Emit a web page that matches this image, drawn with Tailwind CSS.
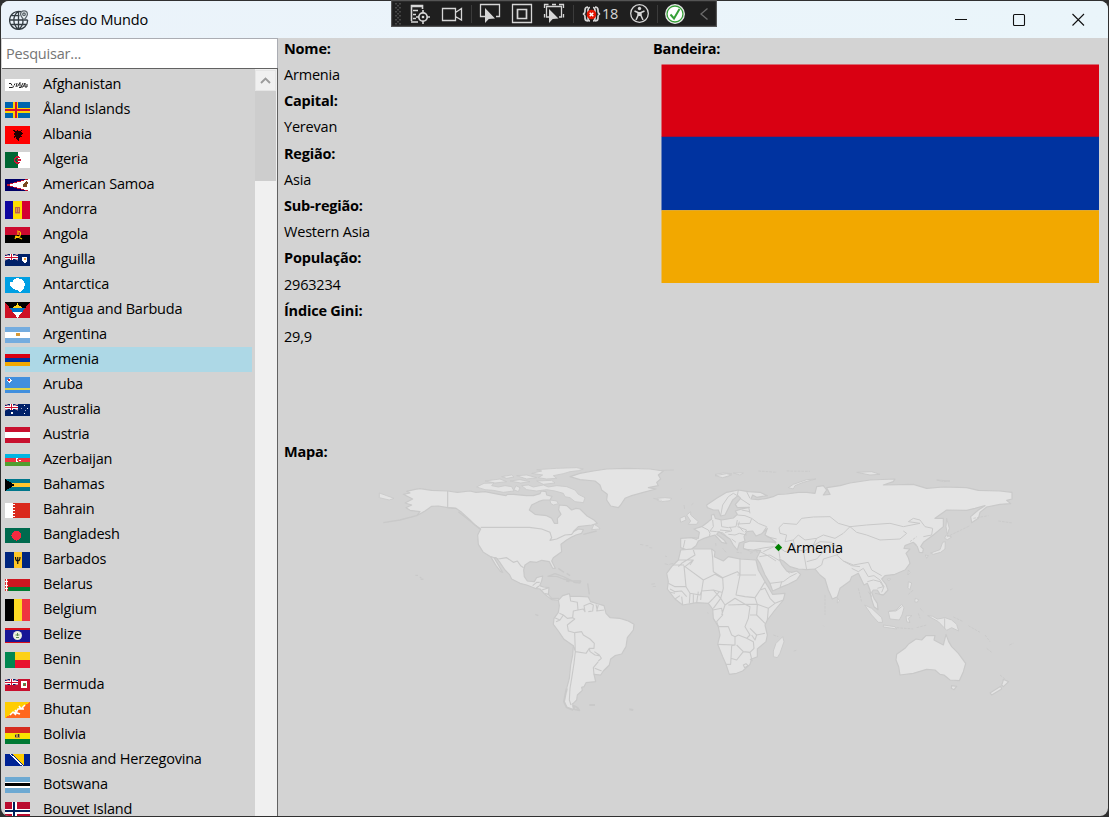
<!DOCTYPE html>
<html lang="pt">
<head>
<meta charset="utf-8">
<title>Países do Mundo</title>
<script src="https://cdn.jsdelivr.net/npm/@tailwindcss/browser@4"></script>
</head>
<body class="w-[1109px] h-[817px] overflow-hidden bg-[#303030] font-['Open_Sans','Noto_Sans',sans-serif] text-[14.5px] tracking-[-0.2px] text-black">
<div class="relative ml-px pt-px w-[1108px] h-[816px]">
<div class="flex flex-col w-[1107px] h-[815px] rounded-lg overflow-hidden bg-[#d3d3d3]">
  <header class="flex items-center h-[37px] shrink-0 bg-linear-to-r from-[#ebf3fa] to-[#eaf5fa]">
    <svg class="ml-2 w-5 h-5" viewBox="0 0 20 20" fill="none" stroke="#333c42" stroke-width="1.300">
      <path d="M12 1.7A9 9 0 1 0 18.6 10M9.5 1.4V19.2M1 10H18.6M2 5.7H10.500M2.300 14.500H17.200M9 1.500C3.500 6 3.500 14.500 9 19M10 19C14 15.500 14.500 12 13.500 9"/>
      <path d="M15 10C12.500 7 11.600 6 11.600 4.300a3.400 3.400 0 0 1 6.800 0C18.400 6 17.500 7 15 10Z" fill="#edf4f8" stroke="#5c666c"/><circle cx="15" cy="4.300" r="1.300" stroke="#5c666c"/>
    </svg>
    <h1 class="ml-[6px] text-[14.5px]">Países do Mundo</h1>
    <svg class="ml-auto mr-[23px] w-[132px] h-[16px]" viewBox="0 0 132 16" fill="none" stroke="#111" stroke-width="1.1"><path d="M2 7.500h12"/><rect x="60.500" y="2.500" width="11" height="11" rx="1"/><path d="M119.500 2l11.500 11.500M131 2L119.500 13.500"/></svg>
  </header>
  <div class="flex flex-1 min-h-0">
    <aside class="flex flex-col w-[277px] shrink-0 pl-px">
      <div class="flex items-center h-[30px] shrink-0 bg-white border-t border-[#abadb3] border-r pl-[4px] text-[#757575]">Pesquisar...</div>
      <div class="flex flex-1 min-h-0 border-t border-r border-[#626262]">
        <ul id="list" class="flex-1 pt-[3px] pl-[3px] pr-[3px] overflow-hidden"></ul>
        <div class="w-[22px] shrink-0 pt-px pr-px bg-[#f0f0f0]">
          <div class="flex items-center justify-center h-[21px] border border-[#e5e5e5]"><svg class="w-[11px] h-[8px]" viewBox="0 0 11 8" fill="none" stroke="#9b9b9b" stroke-width="1.900"><path d="M1 6l4.500-4.500L10 6"/></svg></div>
          <div class="h-[90px] bg-[#cdcdcd]"></div>
        </div>
      </div>
    </aside>
    <main class="flex-1 pl-[6px]">
      <div class="flex h-[401px]">
        <dl class="w-[369px] -mt-[2.2px] leading-[26.2px] [&>dt]:font-bold">
          <dt>Nome:</dt><dd>Armenia</dd><dt>Capital:</dt><dd>Yerevan</dd><dt>Região:</dt><dd>Asia</dd><dt>Sub-região:</dt><dd>Western Asia</dd><dt>População:</dt><dd>2963234</dd><dt>Índice Gini:</dt><dd>29,9</dd>
        </dl>
        <section class="-mt-[2px] leading-[26px]">
          <h2 class="font-bold tracking-[-0.3px]">Bandeira:</h2>
          <svg class="mt-[2px] ml-2 w-[439px] h-[220px]" viewBox="0 0 439 220"><path fill="#d90012" d="M.5.500h437.500v72.500H.5z"/><path fill="#0033a0" d="M.5 72.800h437.500v73.400H.5z"/><path fill="#f2a800" d="M.5 146.200h437.500v72.800H.5z"/></svg>
        </section>
      </div>
      <h2 class="font-bold leading-[26px]">Mapa:</h2>
      <div class="relative ml-[86px] w-[660px] h-[270px] -mt-[10px]">
        <svg class="block w-full h-full" viewBox="370 455 660 270" stroke="#c9c9c9" fill="#e4e4e4" stroke-linejoin="round">
          <!-- North America -->
          <g transform="translate(370 455) scale(.33333)" stroke-width="3.500">
            <path d="M100 118L120 114 110 109 135 103 150 101 185 106 233 108 262 112 300 108 318 112 345 110 375 116 408 122 412 118 430 118 470 122 490 122 510 116 514 108 528 110 530 120 546 124 540 135 520 135 505 140 485 150 478 165 495 178 530 182 545 190 553 205 563 205 562 190 573 178 566 165 568 150 590 152 605 165 618 160 630 162 650 182 672 195 682 205 665 210 625 215 610 230 625 222 640 224 635 235 618 240 605 246 590 255 573 268 575 290 550 308 545 318 556 340 548 340 538 320 515 316 500 322 480 320 465 330 461 345 463 365 472 378 493 380 500 368 518 363 515 378 509 392 520 396 537 398 535 418 545 430 565 430 572 436 545 434 525 418 510 402 495 400 470 390 450 385 425 372 418 358 405 345 388 320 378 308 372 308 385 330 398 352 392 350 378 332 362 305 340 292 325 268 323 240 332 222 315 210 300 195 275 172 258 160 233 158 205 153 185 154 165 168 140 182 150 170 120 166 108 158 125 150 105 144 128 132Z"/>
            <path d="M28 114L50 122 72 130 58 135 28 128ZM320 96L342 85 372 84 365 92 385 96 405 92 425 95 432 108 400 112 370 106 345 104ZM438 92L450 98 445 110 432 104ZM455 92L475 90 490 96 520 90 535 96 560 92 590 95 615 105 625 118 645 128 640 143 615 140 600 128 585 125 580 115 555 108 530 104 500 108 470 104ZM485 55L515 48 500 44 560 40 620 38 640 42 625 47 600 50 580 56 550 62 560 70 530 72 505 68 518 60ZM345 78L390 72 410 80 375 84ZM395 65L425 60 432 66 410 70ZM420 78L450 74 480 80 452 84ZM440 62L470 60 500 68 470 72ZM500 78L545 76 555 84 520 88ZM540 135L560 138 565 146 550 150 542 145ZM672 208L686 216 690 222 665 224Z" stroke-width="2.500"/>
            <path d="M534 364L555 356 580 365 608 378 580 372 560 364ZM610 378L632 378 630 384 612 382ZM588 378L598 380M565 340L582 352M590 355L600 362M653 385L658 418M640 238L680 228M136 361L144 361M149 367L154 368M152 372L160 373M496 478L505 482M660 749L672 749M140 182L90 195 40 203M265 170L290 190 330 222" fill="none" stroke-width="4"/>
            <path d="M233 108V158L258 160M332 217H478L515 222 540 232 545 248 540 256 560 252 585 240 605 238 615 225M362 305L385 312 410 308 430 322 442 318 452 332 461 338M488 392L500 382 509 382M507 393L498 400M516 405L537 398M525 416L536 418" fill="none" stroke-width="3.500"/>
          </g>
          <!-- South America, Greenland -->
          <g transform="translate(540 455) scale(.33333)" stroke-width="3.500">
            <path d="M55 436L68 422 88 416 90 424 120 424 145 426 152 440 175 447 192 452 198 475 210 488 240 490 265 498 282 508 280 525 262 548 258 575 245 597 225 602 212 612 208 630 190 648 182 660 162 658 167 680 138 683 132 695 125 697 127 706 112 720 110 735 100 745 92 750 88 740 80 745 82 725 80 700 88 670 92 630 98 600 100 572 72 553 55 528 40 508 42 490 55 472 58 452Z"/>
            <path d="M80 700L76 720 72 740 80 757 100 765M100 752L112 758 118 766 102 762ZM148 750L165 750M268 763L280 765" stroke-width="6"/>
            <path d="M90 424L92 438 112 442 114 465 100 468 98 488 104 492 82 510 85 528 104 533 125 530 130 540 150 552 163 565 162 580 148 580 138 595 106 590 100 572M163 590L178 600 184 610 175 618M148 580L150 590 165 600 178 602M175 620L160 638 162 658M164 640L185 648M106 590L102 625 95 670 90 700 88 735 93 750M114 465L130 462 135 470 132 452 150 445 160 450 158 468 145 470M175 450L170 468 192 465M168 448L172 467M44 488L60 495 70 480M48 500L60 495M58 475L70 480 82 490 100 488M104 533L106 590" fill="none" stroke-width="3.300"/>
            <path d="M90 65L120 55 160 48 200 42 260 40 330 42 370 48 355 60 362 72 350 82 355 92 325 98 348 102 310 112 275 122 255 130 242 150 235 158 212 153 200 135 202 118 185 105 180 90 165 78 120 74Z"/>
            <path d="M350 130L375 128 395 130 390 137 365 140 352 136ZM525 58L550 54 575 56 565 65 545 66ZM580 54L610 54 600 60Z" stroke-width="2.500"/>
            <path d="M363 46L402 45M300 268L310 270M317 272L325 272M328 278L337 279M375 303L381 305M374 326L385 329M388 328L400 325M334 388L345 386M338 395L348 394M502 473L505 475M434 162L432 150M454 150L460 145M422 103L425 101" fill="none" stroke-width="2.500"/>
          </g>
          <!-- Eurasia, Africa, Oceania -->
          <g transform="translate(650 455) scale(.33333)" stroke-width="3.500">
            <path d="M92 250L125 248 145 250 148 232 132 222 155 215 175 200 185 192 184 180 192 178 196 190 215 195 250 189 262 178 256 168 275 162 298 157 262 158 256 148 272 130 264 122 248 135 240 150 225 180 212 183 205 165 190 165 172 158 170 150 200 130 230 112 265 105 295 110 330 112 352 122 320 127 308 120 303 132 325 134 350 130 372 124 385 118 410 117 445 112 470 112 495 115 500 95 520 92 530 105 520 120 540 118 530 98 570 92 600 84 660 75 735 72 730 80 700 90 790 88 830 100 880 96 950 98 985 106 1050 108 1086 112 1086 132 1070 136 1082 146 1050 148 1010 156 990 172 985 190 965 203 962 185 985 165 1005 152 975 160 950 166 890 165 855 190 880 190 880 215 850 240 820 262 812 275 820 282 818 293 808 292 802 275 790 262 765 272 762 280 780 282 768 295 775 308 780 325 765 345 735 358 705 362 695 372 708 388 714 405 700 420 690 418 682 405 670 405 665 412 672 430 682 445 684 464 672 455 664 430 660 405 652 385 642 390 625 355 605 365 600 378 570 400 562 425 547 432 535 405 525 372 510 360 495 342 470 344 445 342 420 335 400 318 388 312 395 328 410 348 425 352 440 348 452 358 440 375 415 388 390 398 368 408 360 385 345 360 330 325 320 310 332 286 300 288 280 280 282 264 300 258 340 260 378 262 360 248 345 240 352 220 335 236 318 243 308 228 290 230 282 245 285 258 268 264 262 285 250 270 240 252 225 242 207 230 200 238 222 255 230 266 215 262 195 240 178 245 162 250 145 258 138 272 125 282 108 284 92 278Z"/>
            <path d="M92 285L130 282 185 282 195 290 193 305 220 318 235 305 270 312 318 315 325 345 345 380 360 405 368 418 405 415 400 435 375 465 352 495 345 510 352 540 348 560 322 582 322 605 305 612 300 628 278 648 260 655 238 658 228 628 218 605 203 568 210 540 205 515 190 490 188 462 175 445 140 443 98 450 75 432 52 402 55 380 50 355 65 335 85 315Z"/>
            <path d="M398 545L402 560 390 595 382 608 370 605 370 588 378 565ZM562 428L569 438 562 444ZM110 180L122 170 122 180 145 200 140 208 115 208 122 198ZM90 190L105 183 108 195 92 202ZM415 98L430 88 470 74 498 72 460 82 435 92 430 102ZM195 62L230 56 245 60 218 68ZM620 52L665 50 690 58 660 60ZM860 75L900 78 880 80ZM890 190L898 220 892 238 888 215ZM888 240L905 246 892 254 884 250ZM886 260L885 282 872 292 850 298 842 294 870 284 878 262ZM826 300L835 302 830 310ZM775 345L780 352 774 360ZM712 372L722 372 716 378ZM775 380L785 384 780 404 774 398ZM796 430L806 434 802 442 794 440ZM644 450L665 460 695 488 698 502 685 502 665 480ZM700 510L735 515 740 522 700 516ZM715 470L738 465 755 448 762 458 756 480 748 495 720 492ZM768 483L786 482 775 490 780 503 770 500ZM833 482L848 484 862 492 885 488 905 495 920 508 926 528 905 518 890 526 865 500Z" stroke-width="2.800"/>
            <path d="M740 598L765 580 775 568 798 552 815 555 828 542 855 542 852 555 880 570 888 538 896 560 905 575 925 595 947 625 940 650 928 677 900 675 882 660 870 658 855 645 830 643 790 655 750 660 746 635 738 615ZM905 692L920 694 912 704 904 700ZM1060 673L1076 680 1060 695 1055 690 1058 682ZM1052 694L1055 702 1025 720 1020 714Z"/>
            <path d="M325 48L380 52M410 48L480 49M10 130L35 136M625 400L635 440M740 518L790 522M800 518L830 510M775 418L790 405M805 475L810 490M810 460L820 470M910 486L940 500M955 512L990 532M1005 540L1020 560M1010 580L1025 592M1078 570L1090 565M1050 660L1065 672M890 246L960 212M970 190L1015 182M1045 198L1088 204M525 420L525 480M370 540L385 545M431 588L440 586M520 512L522 514M900 405L910 400M780 260L800 245M260 292L275 294M228 292L218 280M197 264L198 275M300 295L310 292M318 290L324 292" fill="none" stroke-width="2.500" stroke-dasharray="8 3"/>
            <path d="M235 238L255 240 268 235 290 240M245 252L258 262M188 195L190 215 180 228 200 230M155 215L175 225 180 235 178 245M213 195L215 215 235 218 258 215 262 195M212 182L218 150 235 125 250 115 262 122M262 122L265 105M300 130L290 110M275 165L300 170M262 180L285 182 305 190 300 205 262 207M268 200L265 212 280 230M305 190L325 205 350 215M262 215L290 225 285 232M240 215L245 228 225 232M210 225L240 228M200 230L220 234 235 250M105 255L100 278M125 248L142 255M296 156L300 175M270 130L300 150M350 215L340 230M387 218L400 205 440 208 455 190 490 186 540 185 565 205 600 215 650 210 720 205 760 215 810 205 775 200 790 190 810 195 825 215 848 220 845 240 820 245M600 215L620 232 650 240 690 255 750 252 770 235 760 228M387 218L390 235 410 240 405 260 430 255 445 240 465 255 500 250 520 240 555 250 580 235 600 215M372 262L385 275 405 290 430 282 460 288 470 344M350 245L380 252M340 290L372 275 385 278 390 310M330 290L350 300 378 318M460 290L485 275 510 260 545 262 575 290 560 300 580 318 610 330 655 322 665 345 695 362M470 320L500 312 520 290 540 270M495 342L515 330 520 312 560 300M580 318L605 332 630 335M605 340L625 350 640 340 655 365 672 362 690 375 702 395 695 412M652 380L670 375 690 380 700 395 682 400M360 385L400 380 420 365 440 355M410 348L420 355M390 398L395 380M280 282L310 285 345 278 370 275M328 305L360 300 390 318M430 255L435 280M500 250L490 270 520 275 550 268M884 490L884 520M718 468L738 468 755 455M790 262L800 270M655 410L665 425M700 420L675 415" fill="none" stroke-width="3"/>
            <path d="M130 285L135 300 95 325 85 335M102 330H68M85 315H130L120 330M102 332L108 395 75 395 55 385M130 315L105 335 160 375 195 358 218 370M185 282L188 310 190 350 218 368 262 350 270 358V310M262 360H318M270 360L258 420 285 425 315 428 330 405 345 380M218 368L220 400 212 430 190 405 155 408 160 375M155 408L150 420 120 415 108 395M60 402L75 410 95 408 110 425M98 450L95 425M120 415L118 445M130 415L130 445M145 410L140 443M190 405L215 412M155 405L152 435M175 445L190 430 208 410M212 430L190 460M212 430L225 450 255 430 285 448 322 448 315 428M188 465L215 460 218 480 200 500 205 515 235 515 245 540 255 545V570L203 568M225 450L215 480M235 450L285 448 300 455 295 490 285 515 300 540 290 550 265 540 255 545M322 448L320 480H300M322 448L355 460 352 495M355 460L375 445 360 430 345 400 330 405M375 445L400 435M300 480L320 480 345 505M345 535L320 540 300 520M320 540L315 555 305 540M290 550L310 560 312 580 300 592 280 590 260 570M255 570L245 572 242 628 228 628M242 610L260 615 280 590M300 592L305 612M280 630L288 626 294 632 284 638ZM300 612L308 618M75 432L90 422M60 412L75 415" fill="none" stroke-width="3.300"/>
          </g>
        </svg>
        <div class="absolute left-[404px] top-[83px] flex items-center h-[20px] gap-[4px]"><svg class="w-[9px] h-[9px] -mt-[2px]" viewBox="0 0 9 9"><path d="M4.500 .8L8.200 4.500 4.500 8.200 .8 4.500Z" fill="#008000"/></svg><span>Armenia</span></div>
      </div>
    </main>
  </div>
</div>
<!-- Debug toolbar floating over the title bar -->
<svg class="absolute left-[390px] top-0 w-[326px] h-[27px]" viewBox="391 0 326 27" fill="none" stroke="#d6d6d6" stroke-width="1.300">
  <path d="M391.500 .500h325v26h-325z" fill="#1f1f1f" stroke="#555"/>
  <path d="M396 3v22M400 3v22" stroke="#555" stroke-width="1.500" stroke-dasharray="1.500 2.500"/><path d="M398 5v19" stroke="#555" stroke-width="1.500" stroke-dasharray="1.500 2.500"/>
  <path d="M411.500 21V5.500H422.500V9M411 6.500h12M413 10.500h5M413 14.500h3M413 18.500h3M411 22h7" stroke-width="1.600"/><circle cx="423" cy="17" r="4.200" stroke-width="1.700"/><circle cx="423" cy="17" r=".7"/><path d="M423 10v3M423 21v3M416 17h3M427 17h3" stroke-width="1.600"/>
  <path d="M442.500 8.500h13v12h-13zM455.500 12.500l6-4v11.500l-6-3.500"/>
  <path d="M471.500 5v18M573.500 5v18M657.500 5v18" stroke="#3b3b3b" stroke-width="1"/>
  <path d="M485 16.500H480.500V4.500H499.500V16.500H496"/><path d="M485 8v15l3.800-4 6.200-.5z" fill="#d6d6d6" stroke="none"/>
  <path d="M512.500 4.500h19v18h-19z"/><path d="M517.500 9.500h9v9h-9z" stroke-width="1.700"/>
  <path d="M549 17H546.500V6.500H561.500V17H559M544.500 8V4.500h4M552 4.500h4M559 4.500h4.500V8M544.500 14v3.500M563.500 14v3.500"/><path d="M549 9v14l3.700-4 5.800-.5z" fill="#d6d6d6" stroke="none"/>
  <path d="M588 7q-3 0-3 3v1.500q0 2-2 2.500 2 .5 2 2.500V18q0 3 3 3M595 7q3 0 3 3v1.500q0 2 2 2.500-2 .5-2 2.500V18q0 3-3 3M590 7.500q-2 0-2 3V18q0 3 2 3M593 7.500q2 0 2 3V18q0 3-2 3" stroke-width="1.700"/><circle cx="591.500" cy="14.500" r="4.800" fill="#e51400" stroke="none"/><path d="M589.700 12.700l3.600 3.600M593.300 12.700l-3.600 3.600" stroke="#fff" stroke-width="1.500"/>
  <text x="602" y="19" font-size="14.500" fill="#d6d6d6" stroke="none">18</text>
  <circle cx="639.500" cy="13.500" r="8.800"/><circle cx="639.500" cy="8.500" r="1.700" fill="#d6d6d6" stroke="none"/><path d="M634.500 11l3.500 1.500v3l-2 4.500M644.500 11l-3.500 1.500v3l2 4.500" stroke-width="1.500"/><path d="M638 12h3v4h-3z" fill="#d6d6d6" stroke="none"/>
  <circle cx="675" cy="14" r="9.300" fill="#fff" stroke="#e4e4e4"/><circle cx="675" cy="14" r="8" stroke="#36a037"/><path d="M670.500 14.500l3.500 4 5.500-9.500" stroke="#36a037" stroke-width="2"/>
  <path d="M707.500 8.500l-6.500 5.500 6.500 5.500" stroke="#6b6b6b"/>
</svg>
</div>
<script>
const r=(c,x,y,w,h)=>`<path fill="${c}" d="M${x} ${y}h${w}v${h}h-${w}z"/>`;
const p=(c,d)=>`<path fill="${c}" d="${d}"/>`;
const s=(c,d,w=1)=>`<path fill="none" stroke="${c}" stroke-width="${w}" d="${d}"/>`;
const jack='<g shape-rendering="auto">'+s('#fff','M0 0L13 6M13 0L0 6',1)+s('#d01030','M0 0L13 6M13 0L0 6',.4)+'</g>'+s('#fff','M6.500 0V6M0 3.500H13',3)+s('#d01030','M6.500 0V6M0 3.500H13',1);
const flags=[
['Afghanistan',12,r('#fff',0,0,25,12)+'<g shape-rendering="auto">'+s('#222','M4 4.500h2l1 2M4 8.500h3l2-1M10 4.500l-1 2M11 8l1-4M12.500 7.500l2.500-4v4M14 8.500h2M18 4l-2 4h2l2-4v4h2V5',1)+'</g>'],
['Åland Islands',16,r('#0064ae',0,0,25,16)+s('#ffd300','M10.500 0V16M0 8H25',5)+s('#d21034','M10.500 0V16M0 8H25',2)],
['Albania',18,r('#f00',0,0,25,18)+p('#200','M8 4l3 1 1.500-1L14 5l3-1-1 2 2 1-2 2 1 2-2 0-1 3-1 1-1-1-1-3-2 1 1-3-2-1 2-1z')],
['Algeria',16,r('#006633',0,0,13,16)+r('#fff',13,0,12,16)+s('#d21034','M15 5.500q-5-2-5.500 2.500 .5 4 5.500 2.500M12 8h4',1.500)],
['American Samoa',12,r('#006',0,0,25,12)+p('#c01030','M0 6L25 -1V13z')+p('#fff','M3 6L25 0V12z')+p('#7a4a20','M18 5l3-3 2 1-1 5-4 0z')],
['Andorra',18,r('#10069f',0,0,8,18)+r('#fedd00',8,0,9,18)+r('#d50032',17,0,8,18)+r('#d9a050',10,6,5,7)+s('#c06048','M10.500 6.500h4v5h-4zM12.500 6v6',1)],
['Angola',16,r('#cc092f',0,0,25,8)+r('#000',0,8,25,8)+'<g shape-rendering="auto">'+s('#ffcb00','M12 4q5 0 3 5-2 2-5 1M10 12l1-3 6 3M13 5v3',1.100)+'</g>'],
['Anguilla',12,r('#012169',0,0,25,12)+jack+p('#fff','M17 3h5v4l-2 2-3-2z')+r('#f7a030',19,4,2,2)],
['Antarctica',16,r('#009fe3',0,0,25,16)+p('#fff','M5 5l3 0 1-3 4-1 5 2 2 4-1 5-4 3-3-2-4-1-3-3z')],
['Antigua and Barbuda',16,r('#000',0,0,25,16)+r('#0072c6',0,6,25,4)+r('#fff',0,10,25,6)+p('#fcd116','M8 6l1-2 2 0 1.500-3L14 4l2 0 1 2z')+p('#ce1126','M0 0L12.500 16H0zM25 0L12.500 16H25z')],
['Argentina',16,r('#74acdf',0,0,25,16)+r('#fff',0,5,25,6)+r('#d99a35',11,6,4,3)],
['Armenia',12,r('#d90012',0,0,25,4)+r('#0033a0',0,4,25,4)+r('#f2a800',0,8,25,4)],
['Aruba',16,r('#418fde',0,0,25,16)+r('#ddd44a',0,11,25,2)+p('#fff','M4 1l2.500 2.500L4 6 1.500 3.500z')+r('#d22',3,2,2,2)],
['Australia',12,r('#012169',0,0,25,12)+jack+r('#fff',6,8,2,2)+r('#fff',19,1,1,1)+r('#aac',16,4,1,1)+r('#fff',22,4,1,1)+r('#fff',19,9,1,1)+r('#aac',20,6,1,1)],
['Austria',16,r('#c8102e',0,0,25,16)+r('#fff',0,5,25,6)],
['Azerbaijan',12,r('#00b5e2',0,0,25,4)+r('#ef3340',0,4,25,4)+r('#509e2f',0,8,25,4)+s('#fff','M13 4.500h-2v3h2M14 6h1.500',1)],
['Bahamas',12,r('#00778b',0,0,25,12)+r('#ffc72c',0,4,25,4)+p('#000','M0 0L10 6 0 12z')],
['Bahrain',15,r('#da291c',0,0,25,15)+p('#fff','M0 0H7l3 1.500-3 1.500 3 1.500-3 1.500 3 1.500-3 1.500 3 1.500-3 1.500 3 1.500-3 1.500H0z')],
['Bangladesh',15,r('#006a4e',0,0,25,15)+'<circle cx="11.500" cy="7.500" r="5" fill="#f42a41"/>'],
['Barbados',16,r('#00267f',0,0,9,16)+r('#ffc726',9,0,8,16)+r('#00267f',17,0,8,16)+'<g shape-rendering="auto">'+s('#111','M10.500 5q0 4 2.250 4 2.250 0 2.250-4M12.750 5v7',1.200)+'</g>'],
['Belarus',12,r('#ce1720',0,0,25,8)+r('#007c30',0,8,25,4)+r('#fff',0,0,3,12)+s('#d33','M.5 0v12M2.500 0v12',1)+s('#fff','M0 2.500h3M0 6.500h3M0 9.500h3',1)],
['Belgium',22,r('#000',0,0,9,22)+r('#fdda24',9,0,8,22)+r('#ef3340',17,0,8,22)],
['Belize',15,r('#171696',0,0,25,15)+r('#d90f19',0,0,25,1.500)+r('#d90f19',0,13.500,25,1.500)+'<g shape-rendering="auto"><circle cx="12.500" cy="7.500" r="4.500" fill="#eef0df"/>'+s('#5a8a50','M10.500 7h4M11 9.500h3M12.500 5v3',1)+'</g>'],
['Benin',16,r('#fcd116',0,0,25,8)+r('#e8112d',0,8,25,8)+r('#008751',0,0,10,16)],
['Bermuda',12,r('#c8102e',0,0,25,12)+r('#012169',0,0,13,6)+jack+r('#c8102e',0,6,14,6)+r('#fff',16,2,6,7)+r('#558a50',18,4,3,3)+r('#c33',19,5,1,2)],
['Bhutan',16,r('#ff671f',0,0,25,16)+p('#ffcd00','M0 0H25L0 16z')+'<g shape-rendering="auto">'+s('#fff','M5 13l3-3 3 1 2-4 3 0 4-4M8 10l3 3M10 8l2 3 3 1M14 4l2 3 3 0',1.500)+'</g>'],
['Bolivia',17,r('#d52b1e',0,0,25,6)+r('#f9e300',0,6,25,6)+r('#007934',0,12,25,5)+r('#b59540',10,7,5,4)+s('#333','M10.500 8v2M13.500 7v3',1)],
['Bosnia and Herzegovina',12,r('#002395',0,0,25,12)+p('#fecb00','M7 0H19V12z')+s('#fff','M5 0L18 12',1.200)],
['Botswana',16,r('#6da9d2',0,0,25,16)+r('#fff',0,5,25,6)+r('#000',0,6,25,3)],
['Bouvet Island',17,r('#ba0c2f',0,0,25,17)+s('#fff','M9 0V17M0 9H25',5)+s('#00205b','M9 0V17M0 9H25',2)]
];
document.getElementById('list').innerHTML=flags.map(([n,h,g])=>
 `<li class="flex items-center h-[25px] whitespace-nowrap ${n==='Armenia'?'bg-[#add8e6]':''}"><svg class="w-[25px] shrink-0 mt-px mr-[13px] overflow-hidden" style="height:${h}px" viewBox="0 0 25 ${h}" shape-rendering="crispEdges">${g}</svg><span class="-mt-px">${n}</span></li>`).join('');
</script>
</body>
</html>
